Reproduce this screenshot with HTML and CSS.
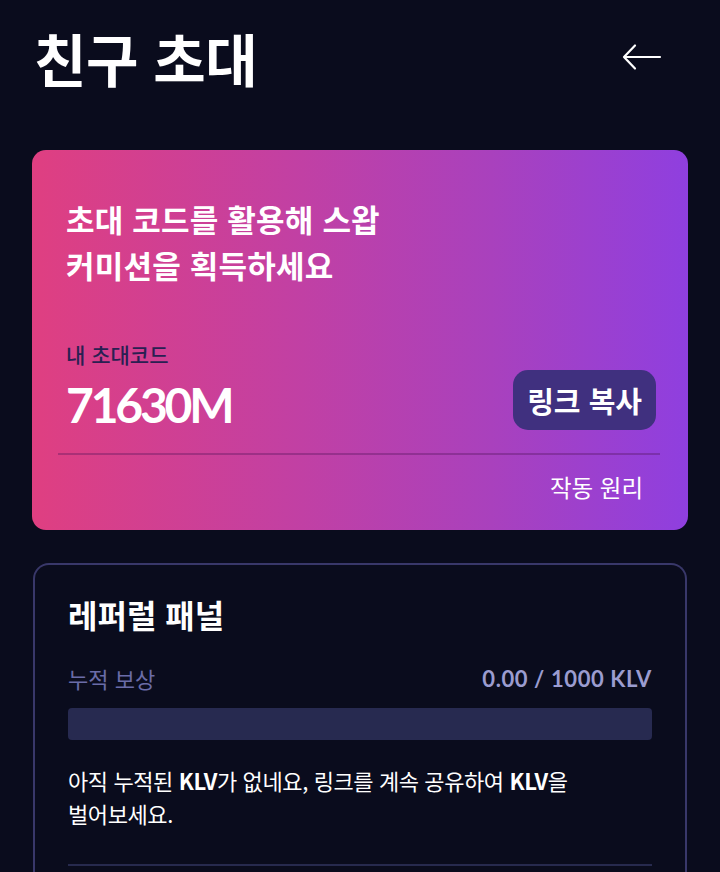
FILE: index.html
```html
<!DOCTYPE html>
<html lang="ko">
<head>
<meta charset="utf-8">
<link rel="stylesheet" href="styles.css">
</head>
<body>
<div class="page">
  <header class="top">
    <h1 class="title">친구 초대</h1>
    <button class="back" aria-label="뒤로">
      <svg width="40" height="28" viewBox="0 0 40 28" fill="none" stroke="#fff" stroke-width="2.2" stroke-linecap="round" stroke-linejoin="round">
        <path d="M38 14H3"/>
        <path d="M13 2.5L2 14l11 11.5"/>
      </svg>
    </button>
  </header>

  <section class="invite">
    <p class="invite-head">초대 코드를 활용해 스왑<br>커미션을 획득하세요</p>
    <div class="code-row">
      <div class="code-col">
        <div class="code-label">내 초대코드</div>
        <div class="code">71630M</div>
      </div>
      <button class="copy">링크 복사</button>
    </div>
    <div class="invite-foot">
      <span class="how">작동 원리</span>
    </div>
  </section>

  <section class="panel">
    <h2 class="panel-title">레퍼럴 패널</h2>
    <div class="reward-row">
      <span class="reward-label">누적 보상</span>
      <span class="reward-value">0.00 / 1000 KLV</span>
    </div>
    <div class="bar"><div class="bar-fill" style="width:0%"></div></div>
    <p class="note">아직 누적된 <b>KLV</b>가 없네요, 링크를 계속 공유하여 <b>KLV</b>을<br>벌어보세요.</p>
    <div class="panel-divider"></div>
  </section>
</div>
</body>
</html>
```

FILE: styles.css
```css
* { box-sizing: border-box; }
html, body {
  margin: 0;
  padding: 0;
  background: #0a0c1d;
  color: #fff;
  font-family: "Noto Sans CJK KR", "Noto Sans", sans-serif;
}
.page {
  padding: 0 32px;
  height: 872px;
  overflow: hidden;
}
.top {
  display: flex;
  align-items: center;
  justify-content: space-between;
  height: 114px;
  padding-left: 2px;
  padding-right: 26px;
}
.title {
  margin: 0;
  font-size: 57px;
  font-weight: 700;
  letter-spacing: -0.5px;
  line-height: 1;
}
.back {
  background: none;
  border: 0;
  padding: 0;
  display: flex;
  cursor: pointer;
}
.invite {
  margin-top: 36px;
  height: 380px;
  border-radius: 14px;
  background: linear-gradient(90deg, #df3f81 0%, #c240a3 40%, #a941bd 70%, #8f3fdf 100%);
  padding: 46px 32px 0 34px;
  display: flex;
  flex-direction: column;
}
.invite-head {
  margin: 0;
  font-size: 31px;
  font-weight: 700;
  line-height: 46px;
  letter-spacing: 0.2px;
}
.code-row {
  margin-top: 52px;
  display: flex;
  align-items: flex-end;
  justify-content: space-between;
}
.code-label {
  font-size: 21px;
  font-weight: 500;
  color: #2a1f52;
  line-height: 28px;
}
.code {
  margin-top: 12px;
  font-family: "Lato", "Noto Sans", sans-serif;
  font-size: 48px;
  font-weight: 700;
  line-height: 50px;
  letter-spacing: -3.2px;
}
.copy {
  height: 60px;
  padding: 0 14px;
  border: 0;
  border-radius: 15px;
  background: #40307f;
  color: #fff;
  font-family: inherit;
  font-size: 29px;
  font-weight: 700;
  letter-spacing: 0;
  margin-bottom: 0;
}
.invite-foot {
  margin: 23px -4px 0 -8px;
  border-top: 2px solid rgba(80, 20, 90, 0.35);
  display: flex;
  justify-content: flex-end;
  padding: 17px 17px 0 0;
}
.how {
  font-size: 23.5px;
  font-weight: 400;
  line-height: 30px;
}
.panel {
  margin: 33px 1px 0;
  border: 2px solid #39386a;
  border-bottom: 0;
  border-radius: 16px 16px 0 0;
  padding: 26px 33px 0 33px;
  height: 320px;
}
.panel-title {
  margin: 0;
  font-size: 32px;
  font-weight: 700;
  line-height: 46px;
  letter-spacing: 0;
}
.reward-row {
  margin-top: 26px;
  display: flex;
  justify-content: space-between;
  align-items: center;
}
.reward-label {
  font-size: 22px;
  color: #6a6ca8;
  line-height: 30px;
}
.reward-value {
  font-family: "Lato", "Noto Sans", sans-serif;
  font-size: 22px;
  font-weight: 700;
  letter-spacing: 0.6px;
  color: #9b9cd0;
}
.bar {
  margin-top: 15px;
  height: 32px;
  border-radius: 4px;
  background: #272a50;
  overflow: hidden;
}
.bar-fill {
  height: 100%;
  background: #8f3fdf;
}
.note {
  margin: 24px 0 0;
  font-size: 22px;
  line-height: 33px;
  letter-spacing: -0.4px;
}
.note b { font-weight: 700; }
.panel-divider {
  margin-top: 34px;
  height: 2px;
  background: #272a4e;
}
```
